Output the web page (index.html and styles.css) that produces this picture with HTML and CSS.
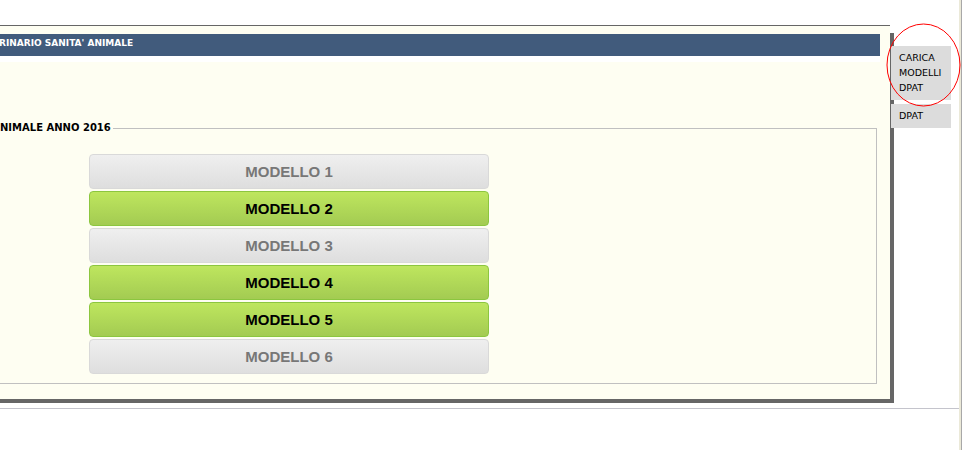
FILE: index.html
```html
<!DOCTYPE html>
<html lang="it">
<head>
<meta charset="utf-8">
<title>Modelli DPAT</title>
<link rel="stylesheet" href="styles.css">
</head>
<body>
<div class="page">
  <div class="main">
    <div class="row">
      <div class="panel">
        <div class="header"><div class="bar">RINARIO SANITA' ANIMALE</div></div>
        <fieldset class="group">
          <legend>NIMALE ANNO 2016</legend>
          <div class="buttons">
            <button class="btn off">MODELLO 1</button>
            <button class="btn on">MODELLO 2</button>
            <button class="btn off">MODELLO 3</button>
            <button class="btn on">MODELLO 4</button>
            <button class="btn on">MODELLO 5</button>
            <button class="btn off">MODELLO 6</button>
          </div>
        </fieldset>
      </div>
      <div class="tabs">
        <div class="tab">CARICA<br>MODELLI<br>DPAT</div>
        <div class="tab">DPAT</div>
      </div>
    </div>
    <div class="rule"></div>
  </div>
  <div class="edge"></div>
</div>
<svg class="circle" width="76" height="84" viewBox="0 0 76 84"><ellipse cx="37.5" cy="42" rx="36.5" ry="41" fill="none" stroke="#ff0000" stroke-width="1"/></svg>
</body>
</html>
```
FILE: styles.css
```css
html, body {
  margin: 0;
  background: #ffffff;
}
body {
  width: 964px;
  height: 450px;
  overflow: hidden;
  position: relative;
}
.page {
  display: flex;
  height: 450px;
}
.main {
  width: 959px;
  flex: none;
  overflow: hidden;
  padding-top: 25px;
  box-sizing: border-box;
}
.row {
  display: flex;
  align-items: flex-start;
}
.panel {
  flex: none;
  margin-left: -10px;
  width: 900px;
  height: 374px;
  box-sizing: border-box;
  border-top: 1px solid #666666;
  background: #fefef2;
  box-shadow: 6px 6px 0 -2px #666666;
  padding-top: 8px;
}
.header {
  margin-right: 10px;
  background: #ffffff;
  padding-bottom: 6px;
}
.bar {
  height: 22px;
  box-sizing: border-box;
  background: #415b7c;
  color: #ffffff;
  font: bold 9px/18px "DejaVu Sans", sans-serif;
  padding-left: 9px;
  white-space: nowrap;
}
.group {
  margin: 60px 13px 0 0;
  border: 1px solid #c0c0c0;
  padding: 20px 0 9px 0;
  min-width: 0;
}
.group legend {
  margin-left: 7px;
  padding: 0 2px;
  font: bold 10px/12px "DejaVu Sans", sans-serif;
  color: #000000;
}
.buttons {
  margin-left: 98px;
  width: 400px;
  display: flex;
  flex-direction: column;
  gap: 2px;
}
.btn {
  appearance: none;
  margin: 0;
  padding: 0 0 1px 0;
  height: 35px;
  box-sizing: border-box;
  border-radius: 4px;
  font: bold 15px "Liberation Sans", Arial, sans-serif;
  display: flex;
  align-items: center;
  justify-content: center;
  cursor: pointer;
}
.off {
  background: linear-gradient(#efefef, #dedede);
  border: 1px solid #d9d9d9;
  color: #777777;
}
.on {
  background: linear-gradient(#bee65e, #a3cb52);
  border: 1px solid #8cc63f;
  color: #000000;
}
.tabs {
  flex: none;
  display: flex;
  flex-direction: column;
  gap: 4px;
  margin-top: 21px;
  margin-left: 1px;
}
.tab {
  width: 60px;
  box-sizing: border-box;
  background: #dcdcdc;
  color: #000000;
  font: 9.5px/15px "DejaVu Sans", sans-serif;
  padding: 4px 0 5px 8px;
}
.rule {
  height: 1px;
  background: #c4c4cc;
  margin-top: 9px;
}
.edge {
  flex: none;
  width: 5px;
  background: linear-gradient(to right, #ebe9d8 0 2px, #a8a8a8 2px 3px, #ffffff 3px);
}
.circle {
  position: absolute;
  left: 886px;
  top: 23px;
}
```
